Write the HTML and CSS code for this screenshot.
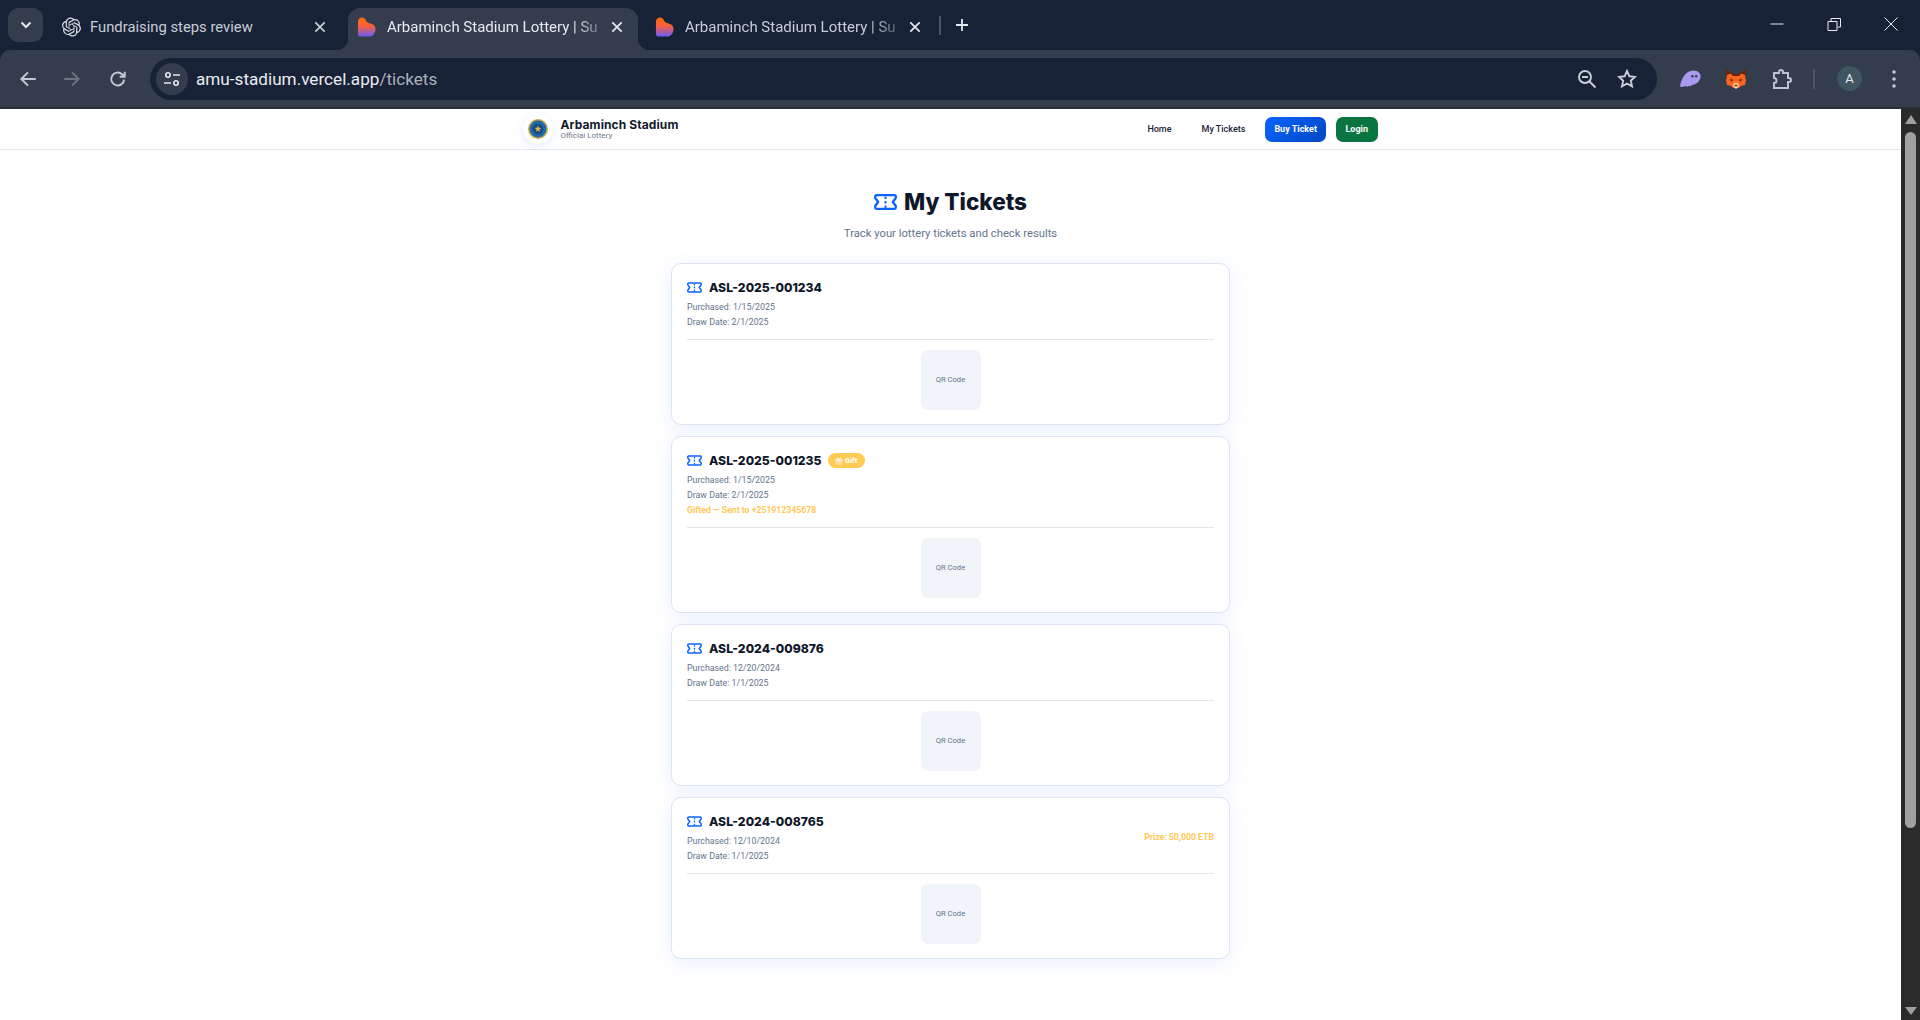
FILE: index.html
```html
<!DOCTYPE html>
<html lang="en">
<head>
<meta charset="utf-8">
<title>Arbaminch Stadium Lottery</title>
<link rel="stylesheet" href="styles.css">
</head>
<body>
<svg class="defs" width="0" height="0" aria-hidden="true">
  <defs>
    <linearGradient id="heart" x1="0" y1="0" x2="0" y2="1">
      <stop offset="0" stop-color="#ff6a00"/>
      <stop offset=".45" stop-color="#f8603f"/>
      <stop offset="1" stop-color="#6a5cf5"/>
    </linearGradient>
    <symbol id="fav" viewBox="0 0 20 20">
      <path fill="url(#heart)" d="M1 4.500C1 1.800 3 0 5.300 0 7.500 0 9 1.400 9.600 3.500 10.300 5.200 12 5.800 14 6.200 17 6.800 19.500 8.500 19.500 12 19.500 16 17 20 12.500 20H4C2 20 1 18.800 1 17Z"/>
    </symbol>
    <symbol id="ticket" viewBox="0 0 23 16">
      <path fill="none" stroke="#0b63ff" stroke-width="2.300" stroke-linejoin="round" d="M2.500 1.200H20.500A1.300 1.300 0 0 1 21.800 2.500V4L18.800 8 21.800 12V13.500A1.300 1.300 0 0 1 20.500 14.800H2.500A1.300 1.300 0 0 1 1.200 13.500V12L4.200 8 1.200 4V2.500A1.300 1.300 0 0 1 2.500 1.200Z"/>
      <path fill="none" stroke="#0b63ff" stroke-width="2" d="M11.500 2.500V5M11.500 7V9.500M11.500 11.500V14"/>
    </symbol>
  </defs>
</svg>

<div class="tabstrip">
  <button class="tab-search"><svg width="12" height="8" viewBox="0 0 12 8"><path d="M1.500 1.500 6 6l4.500-4.500" fill="none" stroke="#e3e7ee" stroke-width="2"/></svg></button>
  <div class="tab tab-first">
    <svg class="fav" viewBox="0 0 24 24"><path fill="#d5dae3" d="M22.2819 9.8211a5.9847 5.9847 0 0 0-.5157-4.9108 6.0462 6.0462 0 0 0-6.5098-2.9A6.0651 6.0651 0 0 0 4.9807 4.1818a5.9847 5.9847 0 0 0-3.9977 2.9 6.0462 6.0462 0 0 0 .7427 7.0966 5.98 5.98 0 0 0 .511 4.9107 6.051 6.051 0 0 0 6.5146 2.9001A5.9847 5.9847 0 0 0 13.2599 24a6.0557 6.0557 0 0 0 5.7718-4.2058 5.9894 5.9894 0 0 0 3.9977-2.9001 6.0557 6.0557 0 0 0-.7475-7.0729zm-9.022 12.6081a4.4755 4.4755 0 0 1-2.8764-1.0408l.1419-.0804 4.7783-2.7582a.7948.7948 0 0 0 .3927-.6813v-6.7369l2.02 1.1686a.071.071 0 0 1 .038.052v5.5826a4.504 4.504 0 0 1-4.4945 4.4944zm-9.6607-4.1254a4.4708 4.4708 0 0 1-.5346-3.0137l.142.0852 4.783 2.7582a.7712.7712 0 0 0 .7806 0l5.8428-3.3685v2.3324a.0804.0804 0 0 1-.0332.0615L9.74 19.9502a4.4992 4.4992 0 0 1-6.1408-1.6464zM2.3408 7.8956a4.485 4.485 0 0 1 2.3655-1.9728V11.6a.7664.7664 0 0 0 .3879.6765l5.8144 3.3543-2.0201 1.1685a.0757.0757 0 0 1-.071 0l-4.8303-2.7865A4.504 4.504 0 0 1 2.3408 7.872zm16.5963 3.8558L13.1038 8.364 15.1192 7.2a.0757.0757 0 0 1 .071 0l4.8303 2.7913a4.4944 4.4944 0 0 1-.6765 8.1042v-5.6772a.79.79 0 0 0-.407-.667zm2.0107-3.0231l-.142-.0852-4.7735-2.7818a.7759.7759 0 0 0-.7854 0L9.409 9.2297V6.8974a.0662.0662 0 0 1 .0284-.0615l4.8303-2.7866a4.4992 4.4992 0 0 1 6.6802 4.66zM8.3065 12.863l-2.02-1.1638a.0804.0804 0 0 1-.038-.0567V6.0742a4.4992 4.4992 0 0 1 7.3757-3.4537l-.142.0805L8.704 5.459a.7948.7948 0 0 0-.3927.6813zm1.0976-2.3654l2.602-1.4998 2.6069 1.4998v2.9994l-2.5974 1.4997-2.6067-1.4997Z"/></svg>
    <span class="tab-title">Fundraising steps review</span>
    <svg class="close close-dim" viewBox="0 0 12 12"><path d="M2 2l8 8M10 2l-8 8"/></svg>
  </div>
  <div class="tab tab-active">
    <svg class="fav"><use href="#fav"/></svg>
    <span class="tab-title tab-fade">Arbaminch Stadium Lottery | Su</span>
    <svg class="close" viewBox="0 0 12 12"><path d="M2 2l8 8M10 2l-8 8"/></svg>
  </div>
  <div class="tab tab-last">
    <svg class="fav"><use href="#fav"/></svg>
    <span class="tab-title tab-fade">Arbaminch Stadium Lottery | Su</span>
    <svg class="close" viewBox="0 0 12 12"><path d="M2 2l8 8M10 2l-8 8"/></svg>
  </div>
  <span class="tab-sep"></span>
  <svg class="new-tab" viewBox="0 0 14 14"><path d="M7 1v12M1 7h12"/></svg>
  <div class="window-controls">
    <svg viewBox="0 0 14 14" class="win"><path d="M0.500 7h13"/></svg>
    <svg viewBox="0 0 14 14" class="win"><path d="M1 4.500h9v9H1zM4 4V1.500h9.500V10H10.500"/></svg>
    <svg viewBox="0 0 14 14" class="win"><path d="M.5.500l13 13M13.500.500l-13 13"/></svg>
  </div>
</div>

<div class="toolbar">
  <svg class="tool tool-first" viewBox="0 0 18 18"><path d="M16 9H3M9 3 3 9l6 6"/></svg>
  <svg class="tool tool-dim" viewBox="0 0 18 18"><path d="M2 9h13M9 3l6 6-6 6"/></svg>
  <svg class="tool" viewBox="0 0 18 18"><path d="M14.500 9.500a5.800 5.800 0 1 1-1.700-4.600L15 7M15 2.500V7h-4.500"/></svg>
  <div class="omnibox">
    <span class="site-chip"><svg viewBox="0 0 18 18" width="18" height="18"><circle cx="5" cy="5" r="2.200"/><path d="M10 5h7M1 13h7"/><circle cx="13" cy="13" r="2.200"/></svg></span>
    <span class="url">amu-stadium.vercel.app<span class="url-path">/tickets</span></span>
    <svg class="omni-icon" viewBox="0 0 20 20"><circle cx="8" cy="8" r="6"/><path d="M5 8h6M12.500 12.500l6 6"/></svg>
    <svg class="omni-icon" viewBox="0 0 20 20"><path d="M10 2l2.400 5.300 5.600.6-4.200 3.800 1.200 5.700-5-2.900-5 2.900 1.200-5.700L2 7.900l5.600-.6z"/></svg>
  </div>
  <svg class="ext ext-ghost" viewBox="0 0 22 18"><path fill="#a99af0" d="M0 17C1 9 6 0 14 0c5 0 8 3 7.500 7-.5 5-5 8-9 8.500-1 .1-1.500 1.500-2.500 1-1-.5-1.500.5-2.500.5s-1.500-.7-2.500-.5c-1 .3-2.500 1.200-3 .5z"/><circle cx="13" cy="6" r="1.300" fill="#343d4e"/><circle cx="17" cy="6" r="1.300" fill="#343d4e"/></svg>
  <svg class="ext ext-fox" viewBox="0 0 20 20"><path fill="#6e2206" d="M0 0l7.500 5h5L20 0l-.5 9H.5z"/><path fill="#f6651f" d="M1 6l3.500-1.500L7 7h6l2.500-2.500L19 6l1 6-1 4-4 1-2 2H7l-2-2-4-1-1-4z"/><path fill="#ffb184" d="M8 13.500h4l1.500 3.500-3.500 2.500L6.500 17z"/><path fill="#2a1a12" d="M8.500 16h3l-1.500 1.500z"/><path fill="#6e2206" d="M4 9.500l3.500 1.500-2.500 1.500zM16 9.500l-3.500 1.500 2.500 1.500z"/><path fill="#fff" d="M8 18.500h4l-2 1.300z"/></svg>
  <svg class="tool tool-puzzle" viewBox="0 0 22 22"><path d="M3 5h5V4a2 2 0 0 1 4 0v1h5v5h1a2 2 0 0 1 0 4h-1v6H3v-5a2.500 2.500 0 0 0 0-5z"/></svg>
  <span class="tool-sep"></span>
  <span class="avatar">A</span>
  <svg class="kebab" viewBox="0 0 4 18"><circle cx="2" cy="2" r="1.800"/><circle cx="2" cy="9" r="1.800"/><circle cx="2" cy="16" r="1.800"/></svg>
</div>

<div class="viewport">
  <div class="page">
    <header class="site-nav">
      <div class="site-nav-inner">
        <div class="brand">
          <span class="brand-logo"><svg viewBox="0 0 20 20" width="20" height="20"><circle cx="10" cy="10" r="10" fill="#c9a64a"/><circle cx="10" cy="10" r="8.400" fill="#1c6aa8"/><circle cx="10" cy="10" r="5.200" fill="#1d4a7c"/><path fill="#d8b84e" d="M10 6.500l.9 2.300 2.400.1-1.900 1.500.7 2.300-2.100-1.300-2.100 1.300.7-2.300-1.900-1.500 2.400-.1z"/></svg></span>
          <span class="brand-text">
            <span class="brand-name">Arbaminch Stadium</span>
            <span class="brand-sub">Official Lottery</span>
          </span>
        </div>
        <nav class="nav-links">
          <a class="nav-link">Home</a>
          <a class="nav-link">My Tickets</a>
          <a class="nav-btn nav-btn-blue">Buy Ticket</a>
          <a class="nav-btn nav-btn-green">Login</a>
        </nav>
      </div>
    </header>

    <main class="content">
      <h1 class="page-title"><svg class="title-icon"><use href="#ticket"/></svg>My Tickets</h1>
      <p class="page-sub">Track your lottery tickets and check results</p>

      <section class="card">
        <div class="card-top">
          <div>
            <div class="ticket-id"><svg class="ticket-icon"><use href="#ticket"/></svg>ASL-2025-001234</div>
            <div class="meta meta-first">Purchased: 1/15/2025</div>
            <div class="meta">Draw Date: 2/1/2025</div>
          </div>
        </div>
        <div class="qr-row"><div class="qr">QR Code</div></div>
      </section>

      <section class="card">
        <div class="card-top">
          <div>
            <div class="ticket-id"><svg class="ticket-icon"><use href="#ticket"/></svg>ASL-2025-001235
              <span class="badge"><svg class="gift" viewBox="0 0 10 10"><path d="M1 3h8v2H1zM2 5h6v4H2zM5 3v6M5 3C4 1 2 1 2.500 2.500L5 3c1-2 3-2 2.500-.5L5 3"/></svg>Gift</span>
            </div>
            <div class="meta meta-first">Purchased: 1/15/2025</div>
            <div class="meta">Draw Date: 2/1/2025</div>
            <div class="meta meta-gold">Gifted — Sent to +251912345678</div>
          </div>
        </div>
        <div class="qr-row"><div class="qr">QR Code</div></div>
      </section>

      <section class="card">
        <div class="card-top">
          <div>
            <div class="ticket-id"><svg class="ticket-icon"><use href="#ticket"/></svg>ASL-2024-009876</div>
            <div class="meta meta-first">Purchased: 12/20/2024</div>
            <div class="meta">Draw Date: 1/1/2025</div>
          </div>
        </div>
        <div class="qr-row"><div class="qr">QR Code</div></div>
      </section>

      <section class="card">
        <div class="card-top">
          <div>
            <div class="ticket-id"><svg class="ticket-icon"><use href="#ticket"/></svg>ASL-2024-008765</div>
            <div class="meta meta-first">Purchased: 12/10/2024</div>
            <div class="meta">Draw Date: 1/1/2025</div>
          </div>
          <div class="prize">Prize: 50,000 ETB</div>
        </div>
        <div class="qr-row"><div class="qr">QR Code</div></div>
      </section>
    </main>
  </div>
  <div class="scrollbar">
    <span class="arrow-up"></span>
    <span class="thumb"></span>
    <span class="arrow-down"></span>
  </div>
</div>
</body>
</html>
```
FILE: styles.css
```css
* { box-sizing: border-box; }
html, body { margin: 0; height: 1020px; overflow: hidden; background: #182236; }
body { font-family: "Roboto", "Liberation Sans", sans-serif; display: flex; flex-direction: column; }
.defs { position: absolute; }

/* tab strip */
.tabstrip { height: 50px; flex: none; background: #182236; display: flex; align-items: flex-end; padding-left: 8px; }
.tab-search { width: 35px; height: 34px; margin-bottom: 8px; background: #343d4e; border: 0; border-radius: 10px; display: flex; align-items: center; justify-content: center; padding: 0; }
.tab { width: 290px; height: 42px; display: flex; align-items: center; padding: 0 14px 5px 9px; color: #c7cdd8; position: relative; border-radius: 12px 12px 0 0; }
.tab-first { width: 305px; padding-left: 19px; padding-right: 21px; }
.tab-active { background: #343d4e; color: #e6e9ef; }
.tab-active::before, .tab-active::after { content: ""; position: absolute; bottom: 0; width: 12px; height: 12px; }
.tab-active::before { left: -12px; background: radial-gradient(circle at 0 0, transparent 12px, #343d4e 12.500px); }
.tab-active::after { right: -12px; background: radial-gradient(circle at 100% 0, transparent 12px, #343d4e 12.500px); }
.tab-last { width: 301px; padding-left: 17px; padding-right: 17px; }
.fav { width: 19px; height: 20px; flex: none; margin-right: 11px; }
.tab-first .fav { margin-right: 9px; }
.tab-title { flex: none; font-size: 15px; white-space: nowrap; }
.tab-first .tab-title { font-size: 14.800px; }
.tab-fade { -webkit-mask-image: linear-gradient(90deg, #000 88%, rgba(0,0,0,.35) 100%); mask-image: linear-gradient(90deg, #000 88%, rgba(0,0,0,.35) 100%); }
.close { width: 14px; height: 14px; flex: none; margin-left: auto; }
.close path { stroke: #e3e7ee; stroke-width: 1.500; fill: none; }
.close-dim path { stroke: #c7cdd8; }
.tab-sep { width: 1.500px; height: 19px; background: #4d5565; margin: 0 0 15px 0; }
.new-tab { width: 14px; height: 14px; margin: 0 0 18px 14px; }
.new-tab path { stroke: #e3e7ee; stroke-width: 1.800; fill: none; }
.window-controls { margin-left: auto; display: flex; gap: 43px; padding: 0 22px 0 0; align-self: flex-start; margin-top: 17px; }
.win { width: 14px; height: 14px; }
.win path { stroke: #e8ebf0; stroke-width: 1; fill: none; }

/* toolbar */
.toolbar { height: 59px; flex: none; background: #343d4e; border-bottom: 2px solid #2b2f38; border-radius: 10px 10px 0 0; display: flex; align-items: center; }
.tool { width: 20px; height: 20px; flex: none; margin-right: 24px; }
.tool path { fill: none; stroke: #c3c9d4; stroke-width: 1.800; }
.tool-first { margin-left: 18px; }
.tool-dim { margin-right: 26px; }
.tool-dim path { stroke: #6d7482; }
.omnibox { width: 1507px; height: 42px; margin-left: -2px; background: #182236; border-radius: 21px; display: flex; align-items: center; padding: 0 20px 0 6px; }
.site-chip { width: 32px; height: 32px; border-radius: 50%; background: #343d4e; display: flex; align-items: center; justify-content: center; margin-right: 8px; }
.site-chip circle, .site-chip path { fill: none; stroke: #e3e7ee; stroke-width: 1.600; }
.url { flex: 1; font-size: 17.150px; color: #e9ecf1; }
.url-path { color: #aab1bd; }
.omni-icon { width: 20px; height: 20px; margin-left: 20px; }
.omni-icon circle, .omni-icon path { fill: none; stroke: #c9ced7; stroke-width: 1.900; }
.ext { flex: none; }
.ext-ghost { width: 21px; height: 18px; margin-left: 23px; }
.ext-fox { width: 20px; height: 20px; margin-left: 25px; }
.tool-puzzle { width: 22px; height: 22px; margin: 0 0 0 25px; }
.tool-puzzle path { stroke: #b9c2d0; stroke-width: 2; }
.tool-sep { width: 2px; height: 20px; background: #4d5565; margin-left: 20px; }
.avatar { width: 25px; height: 25px; border-radius: 50%; background: #3f5560; color: #e6e9ef; font-size: 13px; display: flex; align-items: center; justify-content: center; margin-left: 22px; }
.kebab { width: 4px; height: 18px; margin-left: 30px; }
.kebab circle { fill: #c3c9d4; }

/* page area */
.viewport { flex: 1; display: flex; min-height: 0; }
.page { flex: 1; min-width: 0; background: #fff; }
.scrollbar { width: 19px; flex: none; background: #2b2b2b; display: flex; flex-direction: column; align-items: center; padding: 6px 0 5px; }
.arrow-up { width: 0; height: 0; border-left: 6.500px solid transparent; border-right: 6.500px solid transparent; border-bottom: 9px solid #a0a0a0; }
.arrow-down { width: 0; height: 0; border-left: 6.500px solid transparent; border-right: 6.500px solid transparent; border-top: 8px solid #a0a0a0; margin-top: auto; }
.thumb { width: 11px; height: 696px; border-radius: 6px; background: #a0a0a0; margin-top: 8px; }

.site-nav { height: 41px; border-bottom: 1px solid #e2e8f0; background: #fff; }
.site-nav-inner { max-width: 896px; height: 100%; margin: 0 auto; padding: 0 21px 0 20px; display: flex; align-items: center; justify-content: space-between; }
.brand { display: flex; align-items: center; gap: 8px; }
.brand-logo { width: 30px; height: 30px; border-radius: 50%; background: #fff; box-shadow: 0 2px 8px rgba(11,95,255,.12); display: flex; align-items: center; justify-content: center; }
.brand-text { display: flex; flex-direction: column; }
.brand-name { font-family: "Inter", sans-serif; font-weight: 700; font-size: 12px; line-height: 13px; color: #111a2e; letter-spacing: .1px; }
.brand-sub { font-size: 8px; line-height: 9px; color: #717b8c; }
.nav-links { display: flex; align-items: center; gap: 10px; }
.nav-link { font-size: 9px; font-weight: 500; color: #1b2436; padding: 0 10px; }
.nav-btn { height: 25px; border-radius: 7px; font-size: 9px; font-weight: 700; color: #fff; padding: 0 9px; display: flex; align-items: center; }
.nav-btn-blue { background: linear-gradient(135deg, #0b63ff, #0047c2); }
.nav-btn-green { background: #08743f; padding: 0 9.500px; }

.content { width: 559px; margin: 0 auto; padding-top: 36px; }
.page-title { margin: 0; font-family: "Inter", sans-serif; font-weight: 800; font-size: 22.500px; line-height: 32px; color: #0f172a; display: flex; align-items: center; justify-content: center; gap: 7px; }
.title-icon { width: 23px; height: 16px; }
.page-sub { margin: 9px 0 0; text-align: center; font-size: 11.250px; line-height: 14px; color: #64748b; }
.card { background: #fff; border: 1px solid #dde5f2; border-radius: 10px; box-shadow: 0 4px 20px rgba(11,95,255,.09); padding: 15px 15px 13.500px; margin-bottom: 11.500px; }
.page-sub + .card { margin-top: 22px; }
.card-top { display: flex; justify-content: space-between; align-items: center; border-bottom: 1px solid #e2e6ec; padding-bottom: 9px; }
.ticket-id { font-family: "Inter", sans-serif; font-weight: 800; font-size: 12.200px; line-height: 17px; color: #0f172a; display: flex; align-items: center; }
.ticket-icon { width: 15px; height: 11px; margin-right: 7px; flex: none; }
.meta { font-size: 8.800px; line-height: 15px; color: #64748b; }
.meta-first { margin-top: 4px; }
.meta-gold { color: #ffc857; font-weight: 700; font-size: 8.700px; }
.prize { font-size: 8.700px; font-weight: 700; color: #ffc857; margin-bottom: 4px; }
.badge { display: inline-flex; align-items: center; height: 15px; margin-left: 6px; padding: 0 7.500px; background: #ffcb52; color: #fff; border-radius: 8px; font-family: "Roboto", sans-serif; font-size: 7.500px; font-weight: 700; }
.gift { width: 8px; height: 8px; margin-right: 2px; }
.gift path { fill: none; stroke: #fff; stroke-width: .8; }
.qr-row { display: flex; justify-content: center; padding-top: 10px; }
.qr { width: 60px; height: 60px; border-radius: 7px; background: #f1f4f9; color: #64748b; font-size: 7.600px; padding-bottom: 2px; display: flex; align-items: center; justify-content: center; }
```
